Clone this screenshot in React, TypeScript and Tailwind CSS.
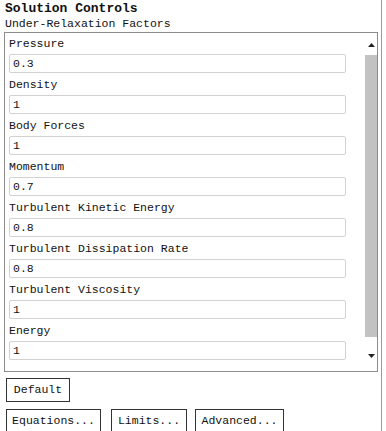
import React from 'react';

const factors = [
    { label: 'Pressure', value: '0.3' },
    { label: 'Density', value: '1' },
    { label: 'Body Forces', value: '1' },
    { label: 'Momentum', value: '0.7' },
    { label: 'Turbulent Kinetic Energy', value: '0.8' },
    { label: 'Turbulent Dissipation Rate', value: '0.8' },
    { label: 'Turbulent Viscosity', value: '1' },
    { label: 'Energy', value: '1' },
];

const SolutionControls = () => {
    return (
        <div className="w-[382px] h-[431px] overflow-hidden bg-white border-r border-[#9a9a9a] text-[#111] font-['Liberation_Mono','DejaVu_Sans_Mono',monospace]">
            <h1 className="pl-[5px] pt-[1px] h-[17px] text-[13px] leading-[16px] font-bold">Solution Controls</h1>
            <p className="pl-[5px] h-[15px] text-[11.5px] leading-[14px]">Under-Relaxation Factors</p>
            <div className="ml-[4px] w-[374px] h-[340px] border border-[#8c8c8c] flex">
                <div className="flex-1 pl-[4px] pt-[1px]">
                    {factors.map((f) => (
                        <div key={f.label} className="mb-[2px]">
                            <div className="h-[20px] flex items-center text-[11.5px]">{f.label}</div>
                            <div className="w-[337px] h-[19px] border border-[#d2d2d2] rounded-[2px] pl-[3px] flex items-center text-[11.5px]">
                                {f.value}
                            </div>
                        </div>
                    ))}
                </div>
                <div className="w-[12px] flex flex-col items-center">
                    <div className="h-[22px] flex items-center justify-center pt-[2px]">
                        <svg width="7" height="4" viewBox="0 0 7 4"><path d="M3.5 0L7 4H0z" fill="#222" /></svg>
                    </div>
                    <div className="w-[12px] h-[282px] bg-[#c2c2c2]"></div>
                    <div className="flex-1 flex items-center justify-center pt-[4px]">
                        <svg width="7" height="4" viewBox="0 0 7 4"><path d="M0 0H7L3.5 4z" fill="#222" /></svg>
                    </div>
                </div>
            </div>
            <div className="pl-[6px] pt-[6px] text-[11.5px]">
                <button className="w-[64px] h-[24px] border border-[#333] bg-white">Default</button>
                <div className="flex mt-[7px]">
                    <button className="w-[95px] h-[24px] border border-[#333] bg-white">Equations...</button>
                    <button className="ml-[10px] w-[76px] h-[24px] border border-[#333] bg-white">Limits...</button>
                    <button className="ml-[8px] w-[89px] h-[24px] border border-[#333] bg-white">Advanced...</button>
                </div>
            </div>
        </div>
    );
};

export default function App() {
    return <SolutionControls />;
}
